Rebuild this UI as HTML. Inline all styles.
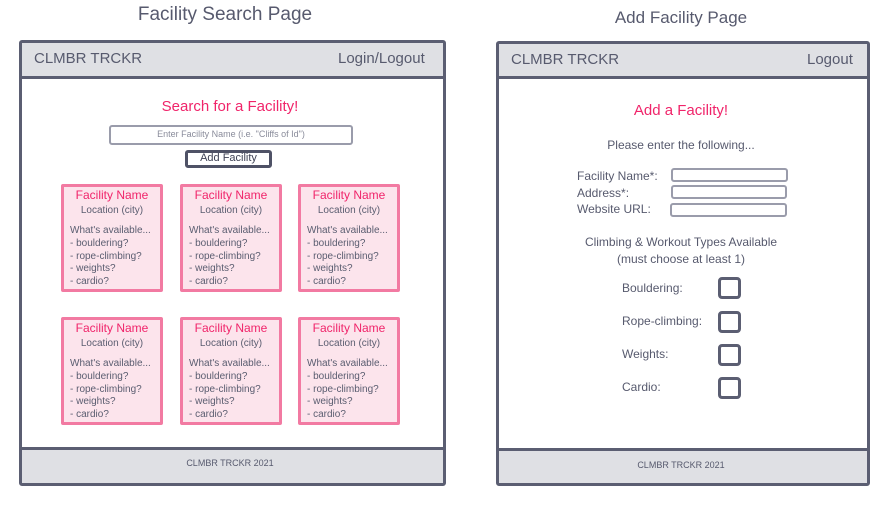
<!DOCTYPE html>
<html><head><meta charset="utf-8"><style>
*{margin:0;padding:0;box-sizing:border-box}
body{width:890px;height:506px;background:#fff;position:relative;overflow:hidden;font-family:"Liberation Sans",sans-serif;color:#575a6e}
.a{position:absolute;white-space:nowrap}
.frame{position:absolute;border:3px solid #5b5e72;border-radius:3px;background:#fff}
.hdr{position:absolute;background:#dfe0e4;border-bottom:3px solid #5b5e72}
.ftr{position:absolute;background:#dfe0e4;border-top:3px solid #5b5e72}
.pink{color:#f0246a}
.card{position:absolute;width:102px;height:108px;background:#fce4ec;border:3px solid #f27aa2;border-radius:2px;font-size:10px;color:#5a5d70}
.card .t{position:absolute;left:0;right:0;top:1px;text-align:center;font-size:12px;color:#f0246a}
.card .l{position:absolute;left:0;right:0;top:18px;text-align:center}
.card .d{position:absolute;left:6px;top:38px;line-height:12.8px}
.inp{position:absolute;border:2.5px solid #9a9cab;border-radius:3px;background:#fff}
.cb{position:absolute;left:718px;width:23px;height:22px;border:3px solid #5b5e72;border-radius:4px}
.c{text-align:center}
</style></head><body>
<div class="a c" style="left:100px;width:250px;top:4px;font-size:19px;color:#575a6e">Facility Search Page</div>
<div class="a c" style="left:581px;width:200px;top:8px;font-size:17px;color:#575a6e">Add Facility Page</div>

<div class="frame" style="left:19px;top:40px;width:427px;height:446px"></div>
<div class="hdr" style="left:22px;top:43px;width:421px;height:36px"></div>
<div class="a" style="left:34px;top:50px;font-size:15px">CLMBR TRCKR</div>
<div class="a" style="left:338px;top:50px;font-size:15px">Login/Logout</div>
<div class="ftr" style="left:22px;top:447px;width:421px;height:36px"></div>
<div class="a c" style="left:130px;width:200px;top:458px;font-size:9px">CLMBR TRCKR 2021</div>

<div class="a pink c" style="left:130px;width:200px;top:98px;font-size:15px">Search for a Facility!</div>
<div class="inp" style="left:109px;top:125px;width:244px;height:20px"></div>
<div class="a c" style="left:109px;width:244px;top:129px;font-size:9px;color:#8a8c9b">Enter Facility Name (i.e. "Cliffs of Id")</div>
<div class="a" style="left:185px;top:150px;width:87px;height:18px;border:3px solid #4f5266;border-radius:3px"></div>
<div class="a c" style="left:185px;width:87px;top:152px;font-size:11px;color:#3f4255">Add Facility</div>

<div class="card" style="left:61px;top:184px"><div class="t">Facility Name</div><div class="l">Location (city)</div><div class="d">What's available...<br>- bouldering?<br>- rope-climbing?<br>- weights?<br>- cardio?</div></div>
<div class="card" style="left:180px;top:184px"><div class="t">Facility Name</div><div class="l">Location (city)</div><div class="d">What's available...<br>- bouldering?<br>- rope-climbing?<br>- weights?<br>- cardio?</div></div>
<div class="card" style="left:298px;top:184px"><div class="t">Facility Name</div><div class="l">Location (city)</div><div class="d">What's available...<br>- bouldering?<br>- rope-climbing?<br>- weights?<br>- cardio?</div></div>
<div class="card" style="left:61px;top:317px"><div class="t">Facility Name</div><div class="l">Location (city)</div><div class="d">What's available...<br>- bouldering?<br>- rope-climbing?<br>- weights?<br>- cardio?</div></div>
<div class="card" style="left:180px;top:317px"><div class="t">Facility Name</div><div class="l">Location (city)</div><div class="d">What's available...<br>- bouldering?<br>- rope-climbing?<br>- weights?<br>- cardio?</div></div>
<div class="card" style="left:298px;top:317px"><div class="t">Facility Name</div><div class="l">Location (city)</div><div class="d">What's available...<br>- bouldering?<br>- rope-climbing?<br>- weights?<br>- cardio?</div></div>

<div class="frame" style="left:496px;top:41px;width:374px;height:445px"></div>
<div class="hdr" style="left:499px;top:44px;width:368px;height:35px"></div>
<div class="a" style="left:511px;top:51px;font-size:15px">CLMBR TRCKR</div>
<div class="a" style="left:807px;top:51px;font-size:15px">Logout</div>
<div class="ftr" style="left:499px;top:448px;width:368px;height:35px"></div>
<div class="a c" style="left:581px;width:200px;top:460px;font-size:9px">CLMBR TRCKR 2021</div>

<div class="a pink c" style="left:581px;width:200px;top:102px;font-size:15px">Add a Facility!</div>
<div class="a c" style="left:581px;width:200px;top:138px;font-size:12px">Please enter the following...</div>
<div class="a" style="left:577px;top:168px;font-size:12px;line-height:16.5px">Facility Name*:<br>Address*:<br>Website URL:</div>
<div class="inp" style="left:671px;top:168px;width:117px;height:14px"></div>
<div class="inp" style="left:671px;top:185px;width:116px;height:14px"></div>
<div class="inp" style="left:670px;top:203px;width:117px;height:14px"></div>
<div class="a c" style="left:561px;width:240px;top:234px;font-size:12px;line-height:16.5px">Climbing &amp; Workout Types Available<br>(must choose at least 1)</div>
<div class="a" style="left:622px;top:281px;font-size:12px">Bouldering:</div>
<div class="a" style="left:622px;top:314px;font-size:12px">Rope-climbing:</div>
<div class="a" style="left:622px;top:347px;font-size:12px">Weights:</div>
<div class="a" style="left:622px;top:380px;font-size:12px">Cardio:</div>
<div class="cb" style="top:277px"></div>
<div class="cb" style="top:311px"></div>
<div class="cb" style="top:344px"></div>
<div class="cb" style="top:377px"></div>
</body></html>
